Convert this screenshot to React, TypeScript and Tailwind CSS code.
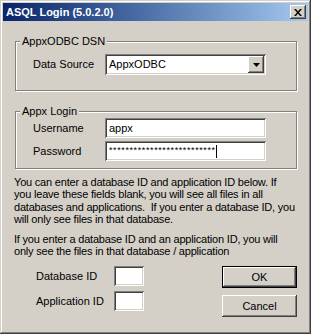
const raised =
    'shadow-[inset_-1px_-1px_#404040,inset_1px_1px_#fff,inset_-2px_-2px_#808080,inset_2px_2px_#d4d0c8]';
const sunken =
    'bg-white shadow-[inset_1px_1px_#808080,inset_-1px_-1px_#fff,inset_2px_2px_#404040,inset_-2px_-2px_#d4d0c8]';

function Field({ className = '', children }: { className?: string; children?: React.ReactNode }) {
    return <div className={`${sunken} flex items-center p-[2px] ${className}`}>{children}</div>;
}

export default function App() {
    return (
        <div className="flex h-[334px] w-[311px] flex-col bg-[#d4d0c8] p-[3px] font-['Liberation_Sans',Arial,sans-serif] text-[11px] text-black shadow-[inset_-1px_-1px_#404040,inset_1px_1px_#d4d0c8,inset_-2px_-2px_#808080,inset_2px_2px_#fff]">
            <div className="flex h-[18px] items-center justify-between bg-linear-to-r from-[#0a246a] to-[#a6caf0] pl-[3px] pr-[2px]">
                <span className="font-bold text-white">ASQL Login (5.0.2.0)</span>
                <div className={`flex h-[14px] w-[16px] items-center justify-center bg-[#d4d0c8] ${raised}`}>
                    <svg width="8" height="7" viewBox="0 0 8 7" aria-hidden="true">
                        <path d="M0 0h2l2 2.5 2-2.5h2L5 3.5 8 7H6L4 4.5 2 7H0l3-3.5z" fill="#000" />
                    </svg>
                </div>
            </div>

            <div className="flex flex-1 flex-col pl-[11px] pr-[11px]">
                <fieldset className="ml-[1px] mt-[14px] w-[282px] border border-[#808080] shadow-[1px_1px_0_#fff,inset_1px_1px_0_#fff]">
                    <legend className="ml-[4px] bg-[#d4d0c8] px-[2px] leading-[13px]">AppxODBC DSN</legend>
                    <div className="flex items-center pb-[15px] pl-[17px] pt-[6px]">
                        <span className="w-[72px]">Data Source</span>
                        <Field className="h-[21px] w-[161px]">
                            <span className="flex-1 pl-[2px]">AppxODBC</span>
                            <div className={`flex h-[17px] w-[16px] items-center justify-center bg-[#d4d0c8] ${raised}`}>
                                <svg width="7" height="4" viewBox="0 0 7 4" aria-hidden="true">
                                    <polygon points="0,0 7,0 3.5,4" fill="#000" />
                                </svg>
                            </div>
                        </Field>
                    </div>
                </fieldset>

                <fieldset className="ml-[1px] mt-[14px] w-[282px] border border-[#808080] shadow-[1px_1px_0_#fff,inset_1px_1px_0_#fff]">
                    <legend className="ml-[4px] bg-[#d4d0c8] px-[2px] leading-[13px]">Appx Login</legend>
                    <div className="flex flex-col gap-[3px] pb-[7px] pl-[17px]">
                        <div className="flex items-center">
                            <span className="w-[72px]">Username</span>
                            <Field className="h-[20px] w-[161px]">
                                <span className="pl-[2px]">appx</span>
                            </Field>
                        </div>
                        <div className="flex items-center">
                            <span className="w-[72px]">Password</span>
                            <Field className="h-[20px] w-[161px]">
                                <span className="pl-[2px] text-[9px] tracking-[0.6px]">**************************</span>
                                <span className="h-[13px] w-px bg-black" />
                            </Field>
                        </div>
                    </div>
                </fieldset>

                <p className="mt-[7px] whitespace-pre leading-[12.4px] tracking-[-0.2px]">
                    {'You can enter a database ID and application ID below. If\n'}
                    {'you leave these fields blank, you will see all files in all\n'}
                    {'databases and applications.  If you enter a database ID, you\n'}
                    {'will only see files in that database.'}
                </p>
                <p className="mt-[7px] whitespace-pre leading-[12.4px] tracking-[-0.2px]">
                    {'If you enter a database ID and an application ID, you will\n'}
                    {'only see the files in that database / application'}
                </p>

                <div className="mt-[9px] flex justify-between">
                    <div className="flex flex-col gap-[5px] pl-[22px]">
                        <div className="flex items-center">
                            <span className="w-[78px]">Database ID</span>
                            <Field className="h-[20px] w-[30px]" />
                        </div>
                        <div className="flex items-center">
                            <span className="w-[78px]">Application ID</span>
                            <Field className="h-[20px] w-[30px]" />
                        </div>
                    </div>
                    <div className="flex flex-col gap-[7px]">
                        <button className={`h-[22px] w-[75px] border border-black bg-[#d4d0c8] ${raised}`}>OK</button>
                        <button className={`h-[22px] w-[75px] bg-[#d4d0c8] ${raised}`}>Cancel</button>
                    </div>
                </div>
            </div>
        </div>
    );
}
